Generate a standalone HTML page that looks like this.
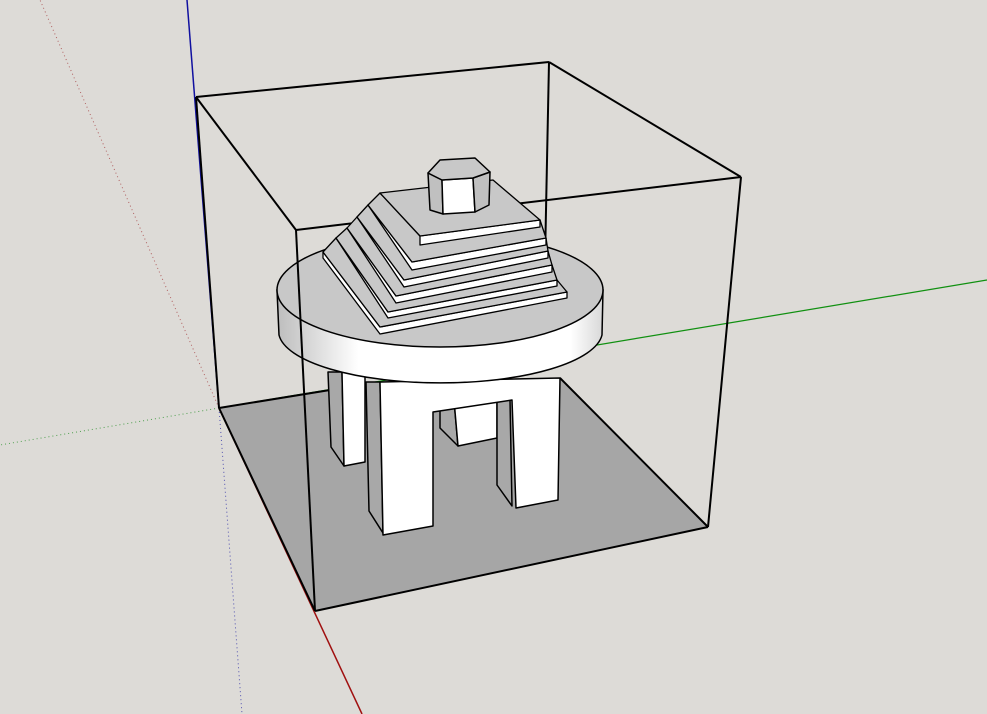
<!DOCTYPE html>
<html><head><style>html,body{margin:0;padding:0;background:#dddbd7;}svg{display:block}</style></head>
<body>
<svg width="987" height="714" viewBox="0 0 987 714" xmlns="http://www.w3.org/2000/svg">
<defs>
<linearGradient id="g" x1="0" x2="1" y1="0" y2="0">
<stop offset="0" stop-color="#bdbdbd"/><stop offset="0.25" stop-color="#fff"/><stop offset="0.9" stop-color="#fff"/><stop offset="1" stop-color="#d8d8d8"/>
</linearGradient>
</defs>
<rect width="987" height="714" fill="#dddbd7"/>
<polygon points="219,408 315,611 708,527 560,378 330,390" fill="#a6a6a6"/>
<line x1="219" y1="408" x2="40" y2="0" stroke="#b06060" stroke-width="1" stroke-dasharray="1,3"/>
<line x1="219" y1="408" x2="0" y2="445" stroke="#50a050" stroke-width="1" stroke-dasharray="1,3"/>
<line x1="219" y1="408" x2="242" y2="714" stroke="#5050b0" stroke-width="1" stroke-dasharray="1,3"/>
<line x1="187" y1="0" x2="219" y2="408" stroke="#1010a0" stroke-width="1.5"/>
<line x1="219" y1="408" x2="362" y2="714" stroke="#a01010" stroke-width="1.5"/>
<line x1="219" y1="408" x2="987" y2="280" stroke="#109010" stroke-width="1.2"/>
<g stroke="#000" stroke-width="2" fill="none">
<line x1="196" y1="97" x2="219" y2="408"/>
<line x1="196" y1="97" x2="549" y2="62"/>
<line x1="549" y1="62" x2="545" y2="260"/>
<line x1="549" y1="62" x2="741" y2="177"/>
<line x1="196" y1="97" x2="296" y2="230"/>
<line x1="296" y1="230" x2="741" y2="177"/>
<line x1="219" y1="408" x2="330" y2="390"/>
</g>
<g stroke="#000" stroke-width="1.5" stroke-linejoin="round">
<polygon points="328,372 342,372 344,466 331,447" fill="#a8a8a8"/>
<polygon points="342,372 365,372 365,462 344,466" fill="#fff"/>
<polygon points="440,400 454,400 458,446 440,428" fill="#a8a8a8"/>
<polygon points="454,400 497,392 497,438 458,446" fill="#fff"/>
<polygon points="366,382 380,382 383,533 369,511" fill="#a8a8a8"/>
<polygon points="497,400 510,400 512,506 497,485" fill="#a8a8a8"/>
<polygon points="380,382 560,378 558,500 516,508 512,400 433,412 433,526 383,535" fill="#fff"/>
</g>
<path d="M277,290 L279,335 A162,52 0 0 0 602,335 L603,290 Z" fill="url(#g)" stroke="#000" stroke-width="1.5"/>
<ellipse cx="440" cy="290" rx="163" ry="57" fill="#c8c8c8" stroke="#000" stroke-width="1.5"/>
<g stroke="#000" stroke-width="1.3" stroke-linejoin="round">
<polygon points="323,252 380,327 567,292 567,298 380,334 323,258" fill="#fff"/>
<polygon points="323,252 336,238 388,312 557,280 567,292 380,327" fill="#c8c8c8"/>
<polygon points="336,238 388,312 557,280 557,286 388,318" fill="#fff"/>
<polygon points="336,238 347,228 396,296 552,265 557,280 388,312" fill="#c8c8c8"/>
<polygon points="347,228 396,296 552,265 552,272 396,303" fill="#fff"/>
<polygon points="347,228 357,217 404,280 548,251 552,265 396,296" fill="#c8c8c8"/>
<polygon points="357,217 404,280 548,251 548,258 404,287" fill="#fff"/>
<polygon points="357,217 368,205 412,262 546,238 548,251 404,280" fill="#c8c8c8"/>
<polygon points="368,205 412,262 546,238 546,245 412,270" fill="#fff"/>
<polygon points="368,205 380,193 420,236 540,220 546,238 412,262" fill="#c8c8c8"/>
<polygon points="420,236 540,220 540,227 420,245" fill="#fff"/>
<polygon points="380,193 493,180 540,220 420,236" fill="#c8c8c8"/>
</g>
<g stroke="#000" stroke-width="1.5" stroke-linejoin="round">
<polygon points="428,173 442,180 443,214 430,210" fill="#c0c0c0"/>
<polygon points="442,180 473,178 475,212 443,214" fill="#fff"/>
<polygon points="473,178 490,172 489,205 475,212" fill="#c0c0c0"/>
<polygon points="428,173 440,160 475,158 490,172 473,178 442,180" fill="#c8c8c8"/>
</g>
<g stroke="#000" stroke-width="2" fill="none">
<line x1="296" y1="230" x2="315" y2="611"/>
<line x1="741" y1="177" x2="708" y2="527"/>
<line x1="219" y1="408" x2="315" y2="611"/>
<line x1="315" y1="611" x2="708" y2="527"/>
<line x1="560" y1="378" x2="708" y2="527"/>
</g>
</svg>
</body></html>
